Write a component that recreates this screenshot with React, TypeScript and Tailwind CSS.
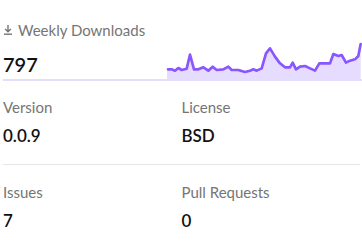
import React from "react";

const pts: [number, number][] = [
  [24,118],[35,118],[45,122],[55,114],[65,120],[80,116],[90,74],[102,118],[115,118],[130,112],[145,122],[158,110],[170,120],[190,118],[205,110],[215,120],[235,120],[255,126],[270,122],[280,118],[290,122],[305,115],[318,70],[330,55],[345,80],[360,100],[375,112],[390,112],[398,98],[408,118],[420,110],[435,108],[450,115],[465,122],[478,100],[495,100],[510,100],[520,72],[535,78],[545,75],[558,98],[570,92],[585,88],[595,78],[602,42],
];

function Chart() {
  const line = pts.map((p, i) => `${i ? "L" : "M"}${p[0]},${p[1]}`).join(" ");
  const area = `${line} L602,153 L21,153 L21,118 Z`;
  return (
    <svg width="202" height="51" viewBox="0 0 606 153" className="block" preserveAspectRatio="none">
      <path d={area} fill="#e6dcff" />
      <path d={line} fill="none" stroke="#8956ff" strokeWidth="8" strokeLinejoin="round" strokeLinecap="round" />
    </svg>
  );
}

function Stat({ label, value }: { label: string; value: string }) {
  return (
    <div className="flex-1">
      <div className="text-[15px] leading-[20px] text-[#757575]">{label}</div>
      <div className="mt-[8px] text-[17px] leading-[22px] font-semibold text-[#111]">{value}</div>
    </div>
  );
}

export default function App() {
  return (
    <div className="w-[362px] h-[242px] bg-white pl-[3px] pr-[2px] pt-[20px]" style={{ fontFamily: "Lato, 'Source Sans Pro', sans-serif" }}>
      <div className="relative border-b-2 border-[#e6ddfd] h-[61px] mr-[-2px]">
        <div className="flex items-center gap-[6px] text-[15px] leading-[20px] text-[#757575]">
          <svg width="8" height="10" viewBox="0 0 8 10" className="ml-[1px]">
            <path d="M4 0 V6.5 M1.2 4 L4 6.8 L6.8 4" stroke="#757575" strokeWidth="1.4" fill="none" />
            <path d="M0 9.2 H8" stroke="#757575" strokeWidth="1.4" />
          </svg>
          <span>Weekly Downloads</span>
        </div>
        <div className="mt-[12px] text-[20px] leading-[24px] font-semibold text-[#111]">797</div>
        <div className="absolute right-0 bottom-[-2px]">
          <Chart />
        </div>
      </div>
      <div className="flex pt-[16px] pb-[17px] border-b border-[#e5e5e5]">
        <Stat label="Version" value="0.0.9" />
        <Stat label="License" value="BSD" />
      </div>
      <div className="flex pt-[17px]">
        <Stat label="Issues" value="7" />
        <Stat label="Pull Requests" value="0" />
      </div>
    </div>
  );
}
